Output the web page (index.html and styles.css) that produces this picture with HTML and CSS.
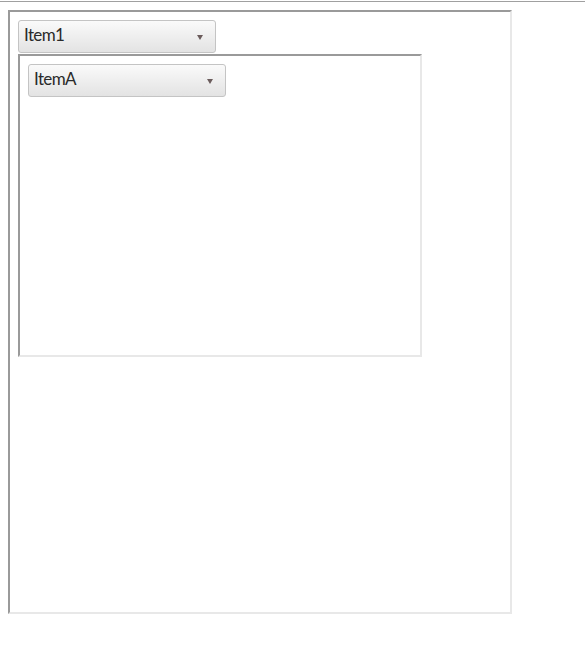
FILE: index.html
```html
<!DOCTYPE html>
<html lang="en">

<head>
    <meta charset="UTF-8">
    <meta name="viewport" content="width=device-width, initial-scale=1.0">
    <title>Nested Panes</title>
    <link rel="stylesheet" href="styles.css">
</head>

<body>
    <div class="topline"></div>
    <div class="pane outer">
        <div class="combo">
            <span class="combo-label">Item1</span>
            <span class="combo-arrow"></span>
        </div>
        <div class="pane inner">
            <div class="combo">
                <span class="combo-label">ItemA</span>
                <span class="combo-arrow"></span>
            </div>
        </div>
    </div>
</body>

</html>
```

FILE: styles.css
```css
* {
    padding: 0;
    margin: 0;
    box-sizing: border-box;
}

body {
    background: #fff;
    font-family: 'Lato', 'Liberation Sans', sans-serif;
}

.topline {
    height: 1px;
    margin-top: 1px;
    background: #a0a0a0;
}

.pane {
    display: flex;
    flex-direction: column;
    align-items: flex-start;
    padding: 8px;
    border-style: solid;
    border-width: 2px;
    border-color: #9a9a9a #e8e8e8 #e8e8e8 #9a9a9a;
    background: #fff;
}

.outer {
    width: 504px;
    height: 604px;
    margin: 8px 0 0 8px;
}

.inner {
    width: 404px;
    height: 303px;
    margin-top: 1px;
}

.combo {
    display: flex;
    align-items: center;
    justify-content: space-between;
    width: 198px;
    height: 33px;
    padding: 0 12px 0 5px;
    border: 1px solid #c4c4c4;
    border-radius: 3px;
    background: linear-gradient(#fafafa, #e3e3e3);
}

.combo-label {
    font-size: 17px;
    line-height: 20px;
    margin-bottom: 3px;
    color: #2a2a2a;
    letter-spacing: -0.6px;
}

.combo-arrow {
    width: 0;
    height: 0;
    border-left: 3.5px solid transparent;
    border-right: 3.5px solid transparent;
    border-top: 5px solid #6b5c5c;
    margin-top: 2px;
}
```
